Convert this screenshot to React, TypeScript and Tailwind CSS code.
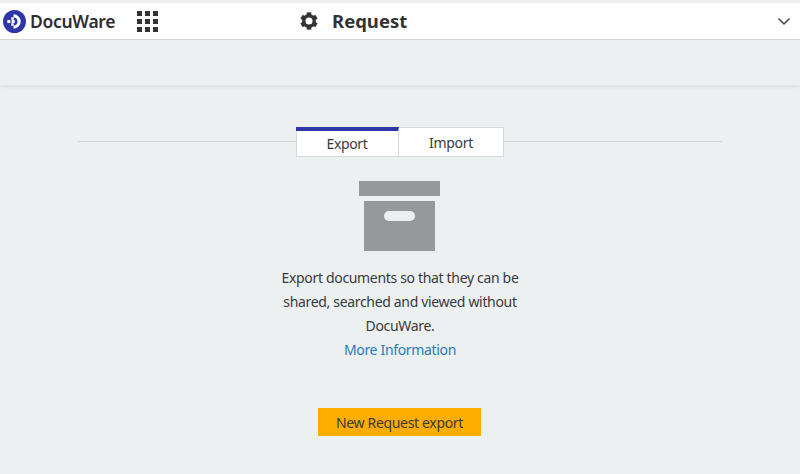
import React from 'react'

const font = { fontFamily: '"Noto Sans", sans-serif' }

const Logo = () => (
  <svg width="23" height="23" viewBox="0 0 24 24" className="shrink-0">
    <circle cx="12" cy="12" r="12" fill="#2f36a8" />
    <path d="M11 4.5a7.5 7.5 0 1 1 0 15v-3.4a4.1 4.1 0 1 0 0-8.2z" fill="#fff" />
    <rect x="4.5" y="10.4" width="3.2" height="3.2" fill="#fff" />
    <rect x="8.6" y="7.6" width="2.6" height="2.6" fill="#fff" />
    <rect x="8.6" y="13.8" width="2.6" height="2.6" fill="#fff" />
    <rect x="9" y="10.4" width="3.2" height="3.2" fill="#fff" />
  </svg>
)

const Gear = () => (
  <svg width="18" height="18" viewBox="0 0 24 24" fill="#333">
    {[0, 60, 120, 180, 240, 300].map((a) => (
      <rect key={a} x="9" y="0.5" width="6" height="6" transform={`rotate(${a} 12 12)`} />
    ))}
    <circle cx="12" cy="12" r="7" fill="none" stroke="#333" strokeWidth="4.5" />
  </svg>
)

export default function App() {
  return (
    <div className="w-[800px] h-[474px] overflow-hidden bg-[#edf0f1] flex flex-col text-[#3a3a3a]" style={font}>
      <div className="h-[3px] bg-[#efefef]" />
      <header className="h-[37px] bg-white border-b border-[#d4d6d7] flex items-center">
        <div className="ml-[3px] flex items-center gap-[4px] w-[134px]">
          <Logo />
          <span className="text-[17.5px] font-semibold text-[#2d2d33] tracking-[-0.3px]">DocuWare</span>
        </div>
        <div className="grid grid-cols-3 gap-[3px] w-[21px]">
          {Array.from({ length: 9 }).map((_, i) => (
            <span key={i} className="w-[5px] h-[5px] bg-[#333]" />
          ))}
        </div>
        <div className="ml-[142px] flex items-center gap-[14px]">
          <Gear />
          <span className="text-[18.5px] font-bold text-[#333]">Request</span>
        </div>
        <svg width="14" height="14" viewBox="0 0 14 14" className="ml-auto mr-[9px]" fill="none" stroke="#444" strokeWidth="1.5">
          <path d="M1.5 4.5 7 10l5.5-5.5" />
        </svg>
      </header>
      <div className="h-[45px] shadow-[0_2px_3px_rgba(0,0,0,0.07)]" />

      <main className="flex-1 flex flex-col items-center">
        <div className="mt-[42px] w-[644px] flex items-center">
          <div className="w-[218px] h-px bg-[#cfd2d3] -translate-y-px" />
          <div className="flex w-[208px] h-[30px] bg-white border border-[#d6d8d9] text-[14px] tracking-[-0.33px]">
            <div className="w-[103px] -mt-px -ml-px border-t-4 border-[#2f36a8] border-r border-r-[#d6d8d9] flex items-center justify-center">
              Export
            </div>
            <div className="flex-1 flex items-center justify-center">Import</div>
          </div>
          <div className="flex-1 h-px bg-[#cfd2d3] -translate-y-px" />
        </div>

        <div className="mt-[24px] mr-px w-[81px] h-[15px] bg-[#96999c]" />
        <div className="mt-[5px] mr-px w-[71px] h-[50px] bg-[#96999c] pt-[10px] flex justify-center">
          <div className="w-[31px] h-[10px] rounded-full bg-[#edf0f1]" />
        </div>

        <p className="mt-[15px] w-[260px] text-center text-[14px] tracking-[-0.33px] leading-[24px]">
          Export documents so that they can be shared, searched and viewed without DocuWare.
        </p>
        <a className="text-[14px] tracking-[-0.33px] leading-[24px] text-[#2a7ab8]">More Information</a>

        <button className="mt-[46px] mr-px w-[163px] h-[28px] bg-[#ffad00] text-[14px] tracking-[-0.33px] text-[#3a3a3a]">
          New Request export
        </button>
      </main>
    </div>
  )
}
